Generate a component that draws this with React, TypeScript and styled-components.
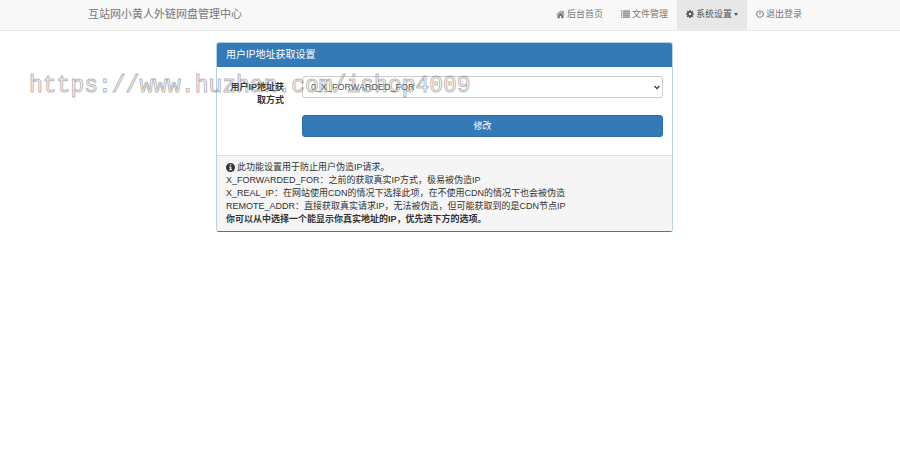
import React from "react";
import styled, { createGlobalStyle } from "styled-components";

const GlobalStyle = createGlobalStyle`
  *, *::before, *::after { box-sizing: border-box; }
  body {
    margin: 0;
    background: #fff;
    color: #333;
    font-family: "Liberation Sans", "Noto Sans CJK SC", sans-serif;
    font-size: 9px;
    line-height: 13px;
  }
`;

const Navbar = styled.header`
  background: #f8f8f8;
  border-bottom: 1px solid #e7e7e7;
  padding-right: 11px;
`;

const NavInner = styled.div`
  display: flex;
  justify-content: space-between;
  max-width: 733px;
  margin: 0 auto;
`;

const Brand = styled.a`
  padding: 0 10px;
  font-size: 11px;
  line-height: 28px;
  color: #777;
  text-decoration: none;
`;

const NavList = styled.nav`
  display: flex;
`;

const NavLink = styled.a<{ $active?: boolean }>`
  display: flex;
  align-items: center;
  gap: 2px;
  height: 30px;
  padding: 0 9px 2px;
  color: ${(p) => (p.$active ? "#555" : "#777")};
  background: ${(p) => (p.$active ? "#e7e7e7" : "transparent")};
  text-decoration: none;
  white-space: nowrap;
`;

const Icon = styled.svg`
  flex: none;
  fill: currentColor;
`;

const Caret = styled.span`
  border-top: 3px solid currentColor;
  border-left: 2px solid transparent;
  border-right: 2px solid transparent;
`;

const Main = styled.main`
  padding: 11px 11px 0 0;
`;

const Panel = styled.section`
  max-width: 457px;
  margin: 0 auto;
  border: 1px solid #b5d3e2;
  border-bottom-color: #4f7786;
  border-radius: 3px;
  overflow: hidden;
`;

const PanelTitle = styled.h3`
  margin: 0;
  padding: 4px 9px;
  background: #337ab7;
  color: #fff;
  font-size: 10px;
  font-weight: 400;
  line-height: 16px;
`;

const SettingsForm = styled.form`
  display: grid;
  grid-template-columns: 58px 1fr;
  column-gap: 18px;
  row-gap: 17px;
  padding: 9px 9px 18px;
`;

const FieldLabel = styled.label`
  padding-top: 5px;
  height: 22px;
  font-weight: 700;
  text-align: right;
`;

const SelectBox = styled.div`
  display: grid;
  align-items: center;
  height: 22px;

  & > * {
    grid-area: 1 / 1;
  }
`;

const Select = styled.select`
  appearance: none;
  width: 100%;
  height: 22px;
  padding: 0 18px 0 8px;
  border: 1px solid #ccc;
  border-radius: 3px;
  background: #fff;
  color: #555;
  font: inherit;
`;

const Chevron = styled.svg`
  justify-self: end;
  margin-right: 3px;
  pointer-events: none;
`;

const SubmitButton = styled.button`
  grid-column: 2;
  height: 22px;
  padding: 0;
  border: 1px solid #2e6da4;
  border-radius: 3px;
  background: #337ab7;
  color: #fff;
  font: inherit;
`;

const PanelFooter = styled.footer`
  padding: 5px 9px;
  border-top: 1px solid #ddd;
  background: #f5f5f5;
`;

const Note = styled.p<{ $strong?: boolean }>`
  display: flex;
  align-items: center;
  gap: 2px;
  margin: 0;
  font-weight: ${(p) => (p.$strong ? 700 : 400)};
`;

const Watermark = styled.div`
  position: absolute;
  top: 70px;
  left: 29px;
  font-family: "Liberation Mono", monospace;
  font-size: 23px;
  line-height: 32px;
  color: transparent;
  -webkit-text-stroke: 1px rgba(120, 120, 120, 0.55);
  white-space: nowrap;
  pointer-events: none;
`;

function HomeIcon() {
  return (
    <Icon width="9" height="9" viewBox="0 0 16 16" aria-hidden="true">
      <path d="M8 4.6 2.6 9.2V14c0 .4.3.7.7.7h3.5v-4h2.4v4h3.5c.4 0 .7-.3.7-.7V9.2z" />
      <path d="M15.8 7.9 13.4 5.9V1.5h-2.2v2.4L8.9 2a1.4 1.4 0 0 0-1.8 0L.2 7.9l.9 1L8 3.2l6.900 5.700z" />
    </Icon>
  );
}

function ListIcon() {
  return (
    <Icon width="9" height="8" viewBox="0 0 18 16" aria-hidden="true">
      <path d="M0 1h2.4v2.4H0zM0 5h2.4v2.4H0zM0 9h2.4v2.4H0zM0 13h2.4v2.4H0zM4 1h14v2.4H4zM4 5h14v2.4H4zM4 9h14v2.4H4zM4 13h14v2.4H4z" />
    </Icon>
  );
}

function CogIcon() {
  return (
    <Icon width="8" height="8" viewBox="0 0 16 16" aria-hidden="true">
      <path
        fillRule="evenodd"
        d="M6.700 0h2.600l.4 2.200 1.300.6 1.900-1.300 1.700 1.800-1.300 1.800.5 1.300 2.200.4v2.500l-2.200.4-.6 1.300 1.300 1.800-1.800 1.800-1.800-1.300-1.300.5-.3 2.200H6.700l-.4-2.200-1.300-.5-1.800 1.300-1.800-1.800 1.300-1.800-.6-1.300L0 9.300V6.800l2.200-.4.5-1.300-1.300-1.800 1.800-1.800L5 2.800l1.300-.6zM8 5.400a2.600 2.600 0 1 0 0 5.200 2.600 2.600 0 0 0 0-5.200z"
      />
    </Icon>
  );
}

function PowerIcon() {
  return (
    <Icon width="8" height="8" viewBox="0 0 16 16" aria-hidden="true">
      <path
        d="M4 2.800a6.600 6.600 0 1 0 8 0M8 1v6.800"
        fill="none"
        stroke="currentColor"
        strokeWidth="2.2"
        strokeLinecap="round"
      />
    </Icon>
  );
}

function InfoIcon() {
  return (
    <Icon width="9" height="9" viewBox="0 0 16 16" aria-hidden="true">
      <path
        fillRule="evenodd"
        d="M8 0a8 8 0 1 0 0 16A8 8 0 0 0 8 0zM6.800 2.400h2.600v2.200H6.800zM5.600 6h3.800v5.200h1.200V13h-5v-1.800h1.200V7.800H5.600z"
      />
    </Icon>
  );
}

export default function App() {
  return (
    <>
      <GlobalStyle />
      <Navbar>
        <NavInner>
          <Brand href="#">互站网小黄人外链网盘管理中心</Brand>
          <NavList>
            <NavLink href="#home"><HomeIcon />后台首页</NavLink>
            <NavLink href="#files"><ListIcon />文件管理</NavLink>
            <NavLink href="#settings" $active><CogIcon />系统设置<Caret /></NavLink>
            <NavLink href="#logout"><PowerIcon />退出登录</NavLink>
          </NavList>
        </NavInner>
      </Navbar>
      <Main>
        <Panel>
          <PanelTitle>用户IP地址获取设置</PanelTitle>
          <SettingsForm onSubmit={(e) => e.preventDefault()}>
            <FieldLabel htmlFor="ip-type">用户IP地址获取方式</FieldLabel>
            <SelectBox>
              <Select id="ip-type" defaultValue="0">
                <option value="0">0_X_FORWARDED_FOR</option>
                <option value="1">1_X_REAL_IP</option>
                <option value="2">2_REMOTE_ADDR</option>
              </Select>
              <Chevron width="6" height="5" viewBox="0 0 6 5" aria-hidden="true">
                <path d="M.6 1 3 3.6 5.4 1" fill="none" stroke="#333" strokeWidth="1.2" />
              </Chevron>
            </SelectBox>
            <SubmitButton type="submit">修改</SubmitButton>
          </SettingsForm>
          <PanelFooter>
            <Note><InfoIcon />此功能设置用于防止用户伪造IP请求。</Note>
            <Note>X_FORWARDED_FOR：之前的获取真实IP方式，极易被伪造IP</Note>
            <Note>X_REAL_IP：在网站使用CDN的情况下选择此项，在不使用CDN的情况下也会被伪造</Note>
            <Note>REMOTE_ADDR：直接获取真实请求IP，无法被伪造，但可能获取到的是CDN节点IP</Note>
            <Note $strong>你可以从中选择一个能显示你真实地址的IP，优先选下方的选项。</Note>
          </PanelFooter>
        </Panel>
      </Main>
      <Watermark>https://www.huzhan.com/ishop4009</Watermark>
    </>
  );
}
